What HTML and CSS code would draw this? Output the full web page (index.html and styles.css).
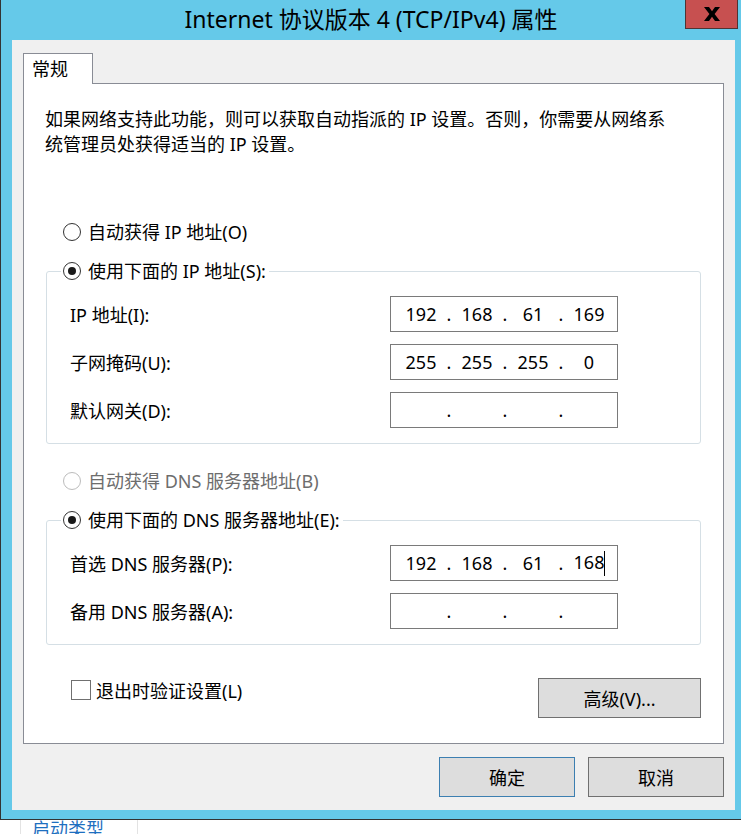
FILE: index.html
```html
<!DOCTYPE html>
<html>
<head>
  <meta charset="utf-8">
  <link rel="stylesheet" href="styles.css">
</head>
<body>
  <div class="window">
    <div class="titlebar">
      <div class="title">Internet 协议版本 4 (TCP/IPv4) 属性</div>
      <div class="close-button">
        <svg width="16" height="14" viewBox="0 0 16 14"><polygon points="0,0 5,0 8,4.3 11,0 16,0 10.6,7 16,14 11,14 8,9.7 5,14 0,14 5.4,7" fill="#000"/></svg>
      </div>
    </div>

    <div class="client">
      <div class="tab-strip">
        <div class="tab">常规</div>
      </div>

      <div class="tab-panel">
        <p class="intro">如果网络支持此功能，则可以获取自动指派的 IP 设置。否则，你需要从网络系<br>统管理员处获得适当的 IP 设置。</p>

        <div class="radio-row first">
          <span class="radio"></span>自动获得 IP 地址(O)
        </div>

        <fieldset class="group">
          <legend>
            <div class="radio-row"><span class="radio checked"></span>使用下面的 IP 地址(S):</div>
          </legend>
          <div class="field-row">
            <div class="field-label">IP 地址(I):</div>
            <div class="ip-box">
              <span class="seg">192</span><span class="sep">.</span><span class="seg">168</span><span class="sep">.</span><span class="seg">61</span><span class="sep">.</span><span class="seg">169</span>
            </div>
          </div>
          <div class="field-row">
            <div class="field-label">子网掩码(U):</div>
            <div class="ip-box">
              <span class="seg">255</span><span class="sep">.</span><span class="seg">255</span><span class="sep">.</span><span class="seg">255</span><span class="sep">.</span><span class="seg">0</span>
            </div>
          </div>
          <div class="field-row">
            <div class="field-label">默认网关(D):</div>
            <div class="ip-box">
              <span class="seg"></span><span class="sep">.</span><span class="seg"></span><span class="sep">.</span><span class="seg"></span><span class="sep">.</span><span class="seg"></span>
            </div>
          </div>
        </fieldset>

        <div class="radio-row spaced disabled">
          <span class="radio"></span>自动获得 DNS 服务器地址(B)
        </div>

        <fieldset class="group">
          <legend>
            <div class="radio-row"><span class="radio checked"></span>使用下面的 DNS 服务器地址(E):</div>
          </legend>
          <div class="field-row">
            <div class="field-label">首选 DNS 服务器(P):</div>
            <div class="ip-box">
              <span class="seg">192</span><span class="sep">.</span><span class="seg">168</span><span class="sep">.</span><span class="seg">61</span><span class="sep">.</span><span class="seg">168<span class="caret"></span></span>
            </div>
          </div>
          <div class="field-row">
            <div class="field-label">备用 DNS 服务器(A):</div>
            <div class="ip-box">
              <span class="seg"></span><span class="sep">.</span><span class="seg"></span><span class="sep">.</span><span class="seg"></span><span class="sep">.</span><span class="seg"></span>
            </div>
          </div>
        </fieldset>

        <div class="options-row">
          <div class="check-row"><span class="checkbox"></span>退出时验证设置(L)</div>
          <button class="button advanced">高级(V)...</button>
        </div>
      </div>

      <div class="actions">
        <button class="button default">确定</button>
        <button class="button">取消</button>
      </div>
    </div>
  </div>

  <div class="behind">
    <div class="behind-cell">启动类型</div>
  </div>
</body>
</html>
```

FILE: styles.css
```css
body {
  margin: 0;
  width: 741px;
  height: 834px;
  overflow: hidden;
  background: #fff;
  font-family: "Noto Sans", "Noto Sans CJK SC", sans-serif;
  font-size: 18px;
  color: #000;
}

.window {
  height: 819px;
  background: #65c9e9;
  border-left: 1px solid #333;
  border-bottom: 1px solid #333;
}

.titlebar {
  height: 40px;
  display: grid;
  grid-template-columns: 1fr auto 1fr;
}

.title {
  grid-column: 2;
  font-size: 23px;
  line-height: 39px;
  white-space: nowrap;
}

.close-button {
  grid-column: 3;
  justify-self: end;
  align-self: start;
  width: 53px;
  height: 29px;
  margin-right: 3px;
  box-sizing: border-box;
  background: #c75050;
  border: 1px solid #4f3434;
  border-top: none;
  display: flex;
  align-items: center;
  justify-content: center;
}

.client {
  margin-left: 11px;
  width: 723px;
  height: 770px;
  box-sizing: border-box;
  padding: 13px 11px;
  background: #f0f0f0;
}

.tab-strip {
  display: flex;
}

.tab {
  position: relative;
  z-index: 1;
  width: 70px;
  height: 31px;
  box-sizing: border-box;
  margin-bottom: -1px;
  padding-left: 8px;
  border: 1px solid #898c95;
  border-bottom: none;
  background: #fff;
  line-height: 30px;
}

.tab-panel {
  height: 661px;
  box-sizing: border-box;
  border: 1px solid #898c95;
  background: #fff;
}

.intro {
  margin: 0;
  padding: 23px 0 0 21px;
  line-height: 25px;
  white-space: nowrap;
}

.radio-row {
  display: flex;
  align-items: center;
  gap: 7px;
  height: 24px;
  line-height: 22px;
  white-space: nowrap;
}

.radio-row.first {
  margin-top: 63px;
  padding-left: 39px;
}

.radio-row.spaced {
  margin-top: 25px;
  padding-left: 39px;
}

.radio-row.disabled {
  color: #6d6d6d;
}

.radio {
  position: relative;
  width: 18px;
  height: 18px;
  box-sizing: border-box;
  border: 1px solid #333;
  border-radius: 50%;
  background: #fff;
  flex: 0 0 auto;
}

.disabled .radio {
  border-color: #bcbcbc;
}

.radio.checked::after {
  content: '';
  position: absolute;
  left: 4px;
  top: 4px;
  width: 8px;
  height: 8px;
  border-radius: 50%;
  background: #1a1a1a;
}

.group {
  margin: 15px 22px 0 22px;
  padding: 13px 0 15px 14px;
  border: 1px solid #d5dfe5;
  border-radius: 3px;
  min-width: 0;
}

.group legend {
  padding: 0 3px 0 2px;
}

.field-row {
  display: flex;
  align-items: center;
  height: 36px;
  padding-left: 9px;
}

.field-row + .field-row {
  margin-top: 12px;
}

.field-label {
  width: 320px;
  white-space: nowrap;
}

.ip-box {
  display: flex;
  align-items: center;
  width: 228px;
  height: 36px;
  box-sizing: border-box;
  padding-left: 8px;
  border: 1px solid #7a7a7a;
  background: #fff;
  font-size: 18px;
}

.seg {
  width: 44px;
  text-align: center;
}

.sep {
  width: 12px;
  text-align: center;
}

.caret {
  display: inline-block;
  width: 1px;
  height: 25px;
  margin-right: -1px;
  background: #000;
  vertical-align: middle;
}

.options-row {
  display: flex;
  justify-content: space-between;
  align-items: flex-start;
  margin-top: 33px;
  padding: 0 22px 0 47px;
}

.check-row {
  display: flex;
  align-items: center;
  gap: 5px;
  margin-top: 2px;
  height: 20px;
}

.checkbox {
  width: 20px;
  height: 20px;
  box-sizing: border-box;
  border: 1px solid #707070;
  background: #fff;
}

.button {
  height: 40px;
  box-sizing: border-box;
  border: 1px solid #707070;
  background: #dddddd;
  font-family: inherit;
  font-size: 18px;
  color: #000;
  padding: 0;
}

.button.advanced {
  width: 163px;
}

.actions {
  display: flex;
  justify-content: flex-end;
  gap: 13px;
  margin-top: 13px;
}

.actions .button {
  width: 136px;
}

.button.default {
  border-color: #3c7fb1;
}

.behind {
  height: 14px;
  overflow: hidden;
}

.behind-cell {
  margin-left: 20px;
  width: 118px;
  height: 14px;
  box-sizing: border-box;
  padding-left: 11px;
  border-left: 1px solid #e3e3e3;
  border-right: 1px solid #e3e3e3;
  color: #1e6fc0;
  font-size: 18px;
  line-height: 18px;
}
```
